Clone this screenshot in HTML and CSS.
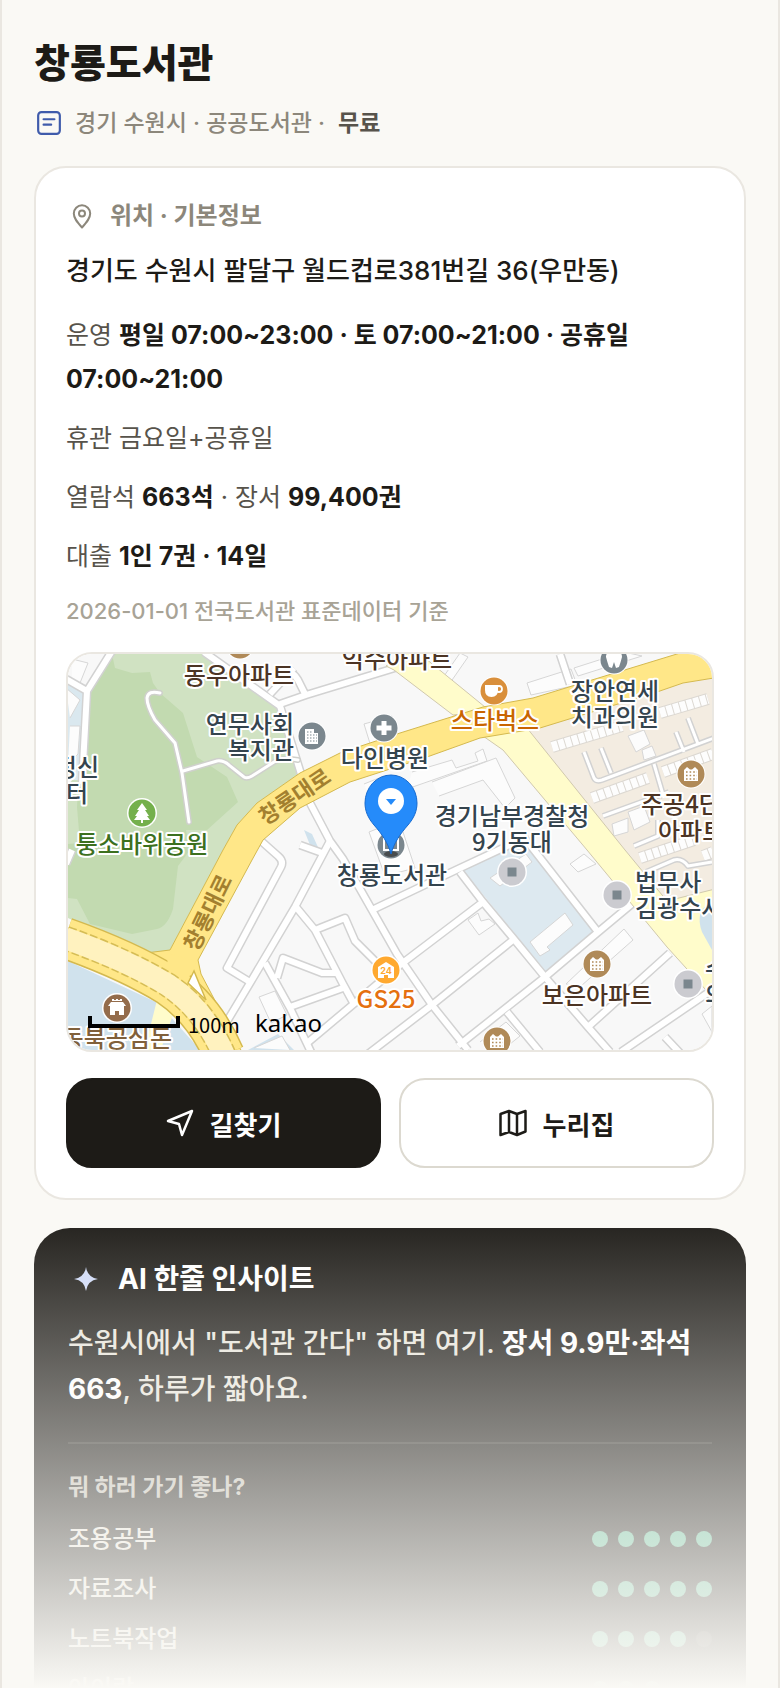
FILE: index.html
```html
<!DOCTYPE html>
<html lang="ko">
<head>
  <meta charset="UTF-8">
  <meta name="viewport" content="width=device-width, initial-scale=1.0">
  <title>창룡도서관</title>
  <link rel="stylesheet" href="styles.css">
</head>
<body>

<main class="page">
  <header class="head">
    <h1>창룡도서관</h1>
    <div class="meta">
      <svg class="icon icon-type" viewBox="0 0 24 24" aria-hidden="true">
        <rect x="2" y="2" width="20" height="20" rx="3"/>
        <path d="M7 8.500h10M7 13.500h7"/>
      </svg>
      <span>경기 수원시 · 공공도서관 ·</span>
      <strong>무료</strong>
    </div>
  </header>

  <section class="card">
    <h2 class="card-title">
      <svg class="icon" viewBox="0 0 26 26" aria-hidden="true">
        <path d="M13 24.500C8 19 4.800 15.200 4.800 10.500a8.200 8.200 0 0 1 16.400 0c0 4.700-3.200 8.500-8.200 14z"/>
        <circle cx="13" cy="10.500" r="3"/>
      </svg>
      위치 · 기본정보
    </h2>
    <p class="address">경기도 수원시 팔달구 월드컵로381번길 36(우만동)</p>
    <div class="info">
      <p>운영 <b>평일 07:00~23:00 · 토 07:00~21:00 · 공휴일 07:00~21:00</b></p>
      <p>휴관 금요일+공휴일</p>
      <p>열람석 <b>663석</b> · 장서 <b>99,400권</b></p>
      <p>대출 <b>1인 7권 · 14일</b></p>
    </div>
    <p class="source">2026-01-01 전국도서관 표준데이터 기준</p>

    <div class="map">
      <svg viewBox="0 0 644 396" preserveAspectRatio="xMidYMid slice" role="img" aria-label="창룡도서관 지도">
        <defs>
          <g id="apt">
            <circle r="14.500" fill="#fff"/><circle r="13.500" fill="#b08a58"/>
            <path fill="#fff" d="M-7 7V-4l3-3 3 2.500h2L4-7l3 3V7z"/>
            <path stroke="#b08a58" stroke-width="1.400" stroke-dasharray="1.600 2" d="M-5-2H6M-5 1.500H6M-5 5H6"/>
          </g>
          <g id="office">
            <circle r="15" fill="#fff"/><circle r="13.500" fill="#cbcbd0"/>
            <path fill="#7b878e" d="M-4.500-4.500h9v9h-9z"/>
          </g>
          <g id="facility">
            <circle r="14.500" fill="#fff"/><circle r="13.500" fill="#7b878e"/>
          </g>
          <g id="streets">
            <path d="M136-2 212 52l16 52 14 45 20 38 13 18 29 51 25 44 35 51 36 45"/>
            <path d="M262 187 227 253 182 329 155 374"/>
            <path d="M212 50 238 41 330 13M208 20q14-8 22 6l8 16M202 40l24-26"/>
            <path d="M192 186l18 16q6 5 3 11L159 314l23 14"/>
            <path d="M228 253 247 276 275 330 287 352M247 276l30-12 10 23 22 22"/>
            <path d="M197 309 222 354 243 398M209 324l6-20 39 15h14M222 353l53-19"/>
            <path d="M238 390 332 311 415 248M304 256l84-40 60-28M232 191l25 9"/>
            <path d="M392 218 415 248 445 284 477 323 520 373 542 398"/>
            <path d="M455 182 530 278M390 392l87-69 52-44 36-30"/>
            <path d="M445 286 364 351 300 400M520 373l82-74M439 358l33 40M553 398l91-62M597 383l15 16"/>
            <path d="M44-3 19 37 14 130M-2 25l21 12M492 0l10 30M-2 210l6-14"/>
          </g>
          <g id="lanes">
            <path d="M516 98l10 26q2 4 8 2L646 84M533 94l10 25M586 110l10 34M620 64l10 26M608 78l8 20M535 162l66-24M566 192l24-10v-16"/>
            <path d="M578 218l28-12q8-2 14 6l24-4"/>
          </g>
        </defs>

        <rect width="644" height="396" fill="#f8f8f8"/>

        <!-- parks, water, blocks -->
        <path fill="#d0e2c2" d="M44 0h92l76 53 18 53 2 13-43 30-20 22-14 25-53 100-18 7-84-39V132l13-20 4-75z"/>
        <path fill="#c2dab0" d="M44 0l3 14 17 5 18-1 3 11 7 10 23 20 14 44 30 20 11 25-31 28H118l4 20-12 16-5 43q-6 18-16 20l-25 5-42-10-13-25-9-1v-54l12-1-3-36 2-35 5-71z"/>
        <path fill="#dae8ef" d="M0 29l16 9-4 88H0z"/>
        <path class="building" d="M-2 34l14 12-10 18M2 72h10l-2 28-10 10M4 5l16 4-8 20-8-4"/>
        <path fill="#dde9f0" d="M395 216l45-21 20-3 69 87-50 40z"/>
        <path fill="#d0e2ed" d="M0 307l90 42 45 50H0zM180 396l30-16 16 16zM236 176l8 4 10 22-10-6z"/>
        <path fill="#f3ece1" d="M459 76l130-38 26-9 29-5v212l-45 11-42-51z"/>

        <!-- buildings -->
        <g class="building">
          <path d="M296 70l28-8 8 24-28 10zM459 29l44-14 6 16-46 10zM506 14l50-16 18 4-64 20zM374 25l18-26 8 4-18 26zM344 118l40-12 4 8 22-7-3-8 8-4 4 12-80 28M364 128l64-24 19 40-10 10-22-28-44 16"/>
          <path d="M296 130l20-8 4 20-18 4M301 178l30-12 16 48-30 8z"/>
          <path d="M462 288l35-29 8 12-26 22 3 3-10 6zM422 224l36-24 6 8-32 24zM400 266l10-7 3 8 8-2 6 5-16 11zM498 330l58-55 9 11-52 46zM191 343l16-6 12 24-16 8zM502 210l14-10 12 10-18 8zM412 388l26-20 14 14-20 16M186 394l28-12 8 14M634 360l10-8v26z"/>
          <path d="M560 82l16-6 6 14-14 8zM544 170l16-6v14l-14 4zM560 158l16-6 6 16-16 8zM574 96l10-4 4 10-12 4z"/>
        </g>
        <g id="terraces">
          <path class="terrace-case" d="M484 93l70-21M592 59l48-14M524 144l56-20M595 118l50-18M572 204l54-18M635 202l10-4"/>
          <path class="terrace" d="M484 93l70-21M592 59l48-14M524 144l56-20M595 118l50-18M572 204l54-18M635 202l10-4"/>
        </g>

        <use href="#streets" class="street-case"/>
        <use href="#streets" class="street"/>
        <use href="#lanes" class="street-case thin"/>
        <use href="#lanes" class="street thin"/>

        <path class="path-case" d="M92 39q-12-3-13 5 0 8 8 22l20 23 7 30 7 49M115 117l34-10q7-1 13 5l14 11q3 2 8-1l22-14q8-5 24-2"/>
        <path class="path" d="M92 39q-12-3-13 5 0 8 8 22l20 23 7 30 7 49M115 117l34-10q7-1 13 5l14 11q3 2 8-1l22-14q8-5 24-2"/>

        <!-- main roads -->
        <path class="avenue" d="M318 12l8 4 59 45 34-4-2-4L352 0l-10-4zM415 82l20 14 84 100 80 97 48 53V235l-48 12-42-51L459 74z"/>
        <path fill="#d0e2ed" d="M644 248q-18 8-10 30l10 18z"/>
        <path fill="#fffccb" d="M90 342l18 10-16 46H76z"/>
        <path class="boulevard" d="M102 296l53-100 14-25 20-22 43-30 40-20 60-20 83-26 50-9L622-4h30v27l-37 6-26 9-117 36-60 10-53 19-77 25-50 26-37 32-11 20-54 100 3 14 42 80h-30l-75-83-17-15z"/>
        <path class="express-case" d="M-3 284q62 22 103 47 36 24 56 70"/>
        <path class="express" d="M-3 284q62 22 103 47 36 24 56 70"/>
        <path fill="#ffe788" d="M99 299l29 8-10 24-18-14z"/>
        <path class="express-line" d="M-3 284q62 22 103 47 36 24 56 70"/>
        <path class="express-inner" d="M-3 284q62 22 103 47 36 24 56 70"/>
        <path fill="#fff" stroke="#d4b94f" stroke-width="1.500" d="M126 317l-6 12 18 17z"/>

        <text class="road-name" transform="translate(231 149) rotate(-34)" text-anchor="middle">창룡대로</text>
        <text class="road-name" transform="translate(147 262) rotate(-64)" text-anchor="middle">창룡대로</text>

        <!-- places -->
        <use href="#apt" x="172" y="-9"/>
        <use href="#apt" x="623" y="120"/>
        <use href="#apt" x="529" y="310"/>
        <use href="#apt" x="429" y="387"/>
        <use href="#office" x="444" y="218"/>
        <use href="#office" x="549" y="241"/>
        <use href="#office" x="620" y="330"/>

        <use href="#facility" x="244" y="82"/>
        <path fill="#fff" d="M237 75h9v4h4v11h-13z"/>
        <path stroke="#7b878e" stroke-width="1.200" stroke-dasharray="1.500 1.500" d="M239 78h6M239 81h10M239 84h10M239 87h10"/>
        <use href="#facility" x="316" y="74"/>
        <path fill="#fff" d="M313.500 67h5v4.500h5v5h-5V81h-5v-4.500h-5v-5h5z"/>
        <use href="#facility" x="546" y="6"/>
        <path fill="#fff" d="M538 3q0-7 8-3 8-4 8 3-1 4-3 10l-3 1-2-6-2 6-3-1q-2-6-3-10z"/>

        <circle cx="426" cy="37" r="14.500" fill="#fff"/><circle cx="426" cy="37" r="13.500" fill="#d98f3b"/>
        <path fill="#fff" d="M417 31h13v5q0 7-6.500 7T417 36z"/>
        <circle cx="431" cy="35" r="3" fill="none" stroke="#fff" stroke-width="1.800"/>
        <circle cx="74" cy="159" r="15" fill="#fff"/><circle cx="74" cy="159" r="13.500" fill="#74b04c"/>
        <path fill="#fff" d="M74 149l5 7h-2l4 6h-2l3 4h-7v3h-2v-3h-7l3-4h-2l4-6h-2z"/>
        <circle cx="318" cy="316" r="15" fill="#fff"/><circle cx="318" cy="316" r="13.500" fill="#ffa930"/>
        <path fill="#fff" d="M310 324v-11l8-5 8 5v11h-6v-3h-4v3z"/>
        <text x="318" y="320" class="store-hours" text-anchor="middle">24</text>
        <circle cx="49" cy="354" r="15" fill="#fff"/><circle cx="49" cy="354" r="13.500" fill="#946c4b"/>
        <path fill="#fff" d="M40 352l3-4h12l3 4h-2v9h-5v-4h-4v4h-5v-9zM44 347v-2h2v1h2v-1h2v1h2v-1h2v2z"/>

        <g class="place">
          <text x="226" y="79" text-anchor="end">연무사회</text>
          <text x="226" y="105" text-anchor="end">복지관</text>
          <text x="317" y="113" text-anchor="middle">다인병원</text>
          <text x="547" y="46" text-anchor="middle">장안연세</text>
          <text x="547" y="72" text-anchor="middle">치과의원</text>
          <text x="444" y="171" text-anchor="middle">경기남부경찰청</text>
          <text x="444" y="197" text-anchor="middle">9기동대</text>
          <text x="324" y="230" text-anchor="middle">창룡도서관</text>
          <text x="31" y="122" text-anchor="end">정신</text>
          <text x="20" y="148" text-anchor="end">터</text>
          <text x="567" y="237">법무사</text>
          <text x="567" y="263">김광수사</text>
          <text x="637" y="324">수</text>
          <text x="637" y="350">의</text>
        </g>
        <g class="place home">
          <text x="171" y="30" text-anchor="middle">동우아파트</text>
          <text x="329" y="14" text-anchor="middle">익수아파트</text>
          <text x="573" y="159">주공4단</text>
          <text x="590" y="186">아파트</text>
          <text x="529" y="350" text-anchor="middle">보은아파트</text>
        </g>
        <text class="place cafe" x="427" y="75" text-anchor="middle">스타벅스</text>
        <text class="place store" x="318" y="354" text-anchor="middle">GS25</text>
        <text class="place park" x="74" y="199" text-anchor="middle">퉁소바위공원</text>
        <text class="place sight" x="104" y="393" text-anchor="end">동북공심돈</text>

        <!-- marker -->
        <use href="#facility" x="323" y="191"/>
        <path fill="#fff" d="M315 184h16v13h-16z"/>
        <path fill="#7b878e" d="M317 186h12v9h-12z"/>
        <ellipse cx="323" cy="200" rx="7" ry="3" fill="#333" opacity=".7"/>
        <path fill="#258bfa" stroke="#176bd0" d="M323 200c-3-11-9-20-17-29-6-7-9-14-9-22a26 28 0 0 1 52 0c0 8-3 15-9 22-8 9-14 18-17 29z"/>
        <circle cx="323" cy="147" r="13" fill="#fff"/>
        <path fill="#258bfa" d="M318 145h10l-5 6z"/>

        <path class="scale" d="M22 362v10h88v-10"/>
        <text x="120" y="379" class="scale-text">100m</text>
        <text x="187" y="378" class="brand">kakao</text>
      </svg>
    </div>

    <div class="actions">
      <a class="btn btn-dark" href="#route">
        <svg class="icon" viewBox="0 0 28 28" aria-hidden="true"><path d="M26 2 2 12l11 3 3 11z"/></svg>
        길찾기
      </a>
      <a class="btn" href="#homepage">
        <svg class="icon" viewBox="0 0 28 28" aria-hidden="true"><path d="M1.500 5 10 2l8 3 8.500-3v20.500L18 26l-8-3-8.500 3zM10 2v21M18 5v21"/></svg>
        누리집
      </a>
    </div>
  </section>

  <section class="insight">
    <h2 class="insight-title">
      <svg class="star" viewBox="0 0 24 24" aria-hidden="true"><path d="M12 0q1.500 10.500 12 12-10.500 1.500-12 12-1.500-10.500-12-12 10.500-1.500 12-12z"/></svg>
      AI 한줄 인사이트
    </h2>
    <p class="insight-text">수원시에서 "도서관 간다" 하면 여기. <b>장서 9.9만·좌석 663</b>, 하루가 짧아요.</p>
    <h3>뭐 하러 가기 좋나?</h3>
    <ul class="scores">
      <li>조용공부 <span class="dots"><i></i><i></i><i></i><i></i><i></i></span></li>
      <li>자료조사 <span class="dots"><i></i><i></i><i></i><i></i><i></i></span></li>
      <li>노트북작업 <span class="dots"><i></i><i></i><i></i><i></i><i class="off"></i></span></li>
      <li>아이랑 <span class="dots"><i></i><i></i><i></i><i class="off"></i><i class="off"></i></span></li>
    </ul>
  </section>

  <div class="fade"></div>
</main>

</body>
</html>
```
FILE: styles.css
```css
:root {
  --bg: #faf9f5;
  --line: #eae7e1;
  --ink: #1d1b17;
  --body: #57534b;
  --muted: #8c877b;
  --faint: #a8a396;
  --mint: #5cb893;
}

* {
  box-sizing: border-box;
}

body {
  margin: 0;
  background: var(--bg);
  color: var(--ink);
  font-family: Inter, "Noto Sans CJK KR", sans-serif;
  font-size: 24px;
}

h1, h2, h3, p, ul {
  margin: 0;
  padding: 0;
}

.page {
  position: relative;
  height: 100vh;
  overflow: hidden;
  padding: 36px 32px 0;
  border-left: 2px solid var(--line);
  border-right: 2px solid var(--line);
}

.icon {
  width: 26px;
  height: 26px;
  flex: none;
  fill: none;
  stroke: currentColor;
  stroke-width: 2;
  stroke-linecap: round;
  stroke-linejoin: round;
}

h1 {
  font-size: 39px;
  line-height: 54px;
  font-weight: 900;
}

.meta {
  display: flex;
  align-items: center;
  gap: 13px;
  margin-top: 14px;
  font-size: 23px;
  font-weight: 500;
  line-height: 38px;
  color: var(--muted);
}

.meta strong {
  color: var(--body);
}

.icon-type {
  color: #3f5bab;
  margin-left: 2px;
}

/* location card */
.card {
  margin-top: 24px;
  padding: 30px;
  background: #fff;
  border: 2px solid var(--line);
  border-radius: 32px;
}

.card-title {
  display: flex;
  align-items: center;
  gap: 15px;
  padding-left: 3px;
  font-size: 24px;
  line-height: 36px;
  color: var(--muted);
}

.address {
  margin-top: 17px;
  font-size: 26px;
  font-weight: 500;
  line-height: 40px;
}

.info {
  display: grid;
  gap: 15px;
  margin-top: 22px;
  font-size: 25px;
  line-height: 44px;
  color: var(--body);
}

.info b {
  color: var(--ink);
}

.source {
  margin-top: 16px;
  font-size: 22px;
  font-weight: 500;
  line-height: 34px;
  color: var(--faint);
}

.map {
  margin-top: 24px;
  border: 2px solid var(--line);
  border-radius: 26px;
  overflow: hidden;
}

.map svg {
  display: block;
  width: 100%;
}

.building {
  fill: #fcfcfc;
  stroke: #d6d6d6;
  stroke-width: 1;
}

.terrace, .terrace-case {
  fill: none;
  stroke: #fdfdfd;
  stroke-width: 10;
  stroke-dasharray: 6 1;
}

.terrace-case {
  stroke: #dcd8d2;
  stroke-width: 12;
  stroke-dasharray: none;
}

.street-case, .street {
  fill: none;
  stroke: #d2d2d2;
  stroke-width: 9;
  stroke-linejoin: round;
}

.street {
  stroke: #fff;
  stroke-width: 6;
}

.street-case.thin {
  stroke-width: 6;
}

.street.thin {
  stroke-width: 3;
}

.path-case, .path {
  fill: none;
  stroke: #cfd0cc;
  stroke-width: 6;
  stroke-linecap: round;
}

.path {
  stroke: #fff;
  stroke-width: 3;
}

.avenue {
  fill: #fffccb;
  stroke: #d0c8ad;
  stroke-width: 1;
}

.boulevard {
  fill: #ffe788;
  stroke: #d4b94f;
  stroke-width: 1;
}

.express-case, .express, .express-line, .express-inner {
  fill: none;
  stroke: #d4b94f;
  stroke-width: 42;
}

.express {
  stroke: #ffe788;
  stroke-width: 39;
}

.express-line {
  stroke: #d6bd55;
  stroke-width: 25;
  stroke-dasharray: 8 3;
}

.express-inner {
  stroke: #fff2bf;
  stroke-width: 22;
}

.road-name {
  font-size: 22px;
  font-weight: 700;
  fill: #a3802f;
}

.place {
  font-family: "Noto Sans CJK KR", sans-serif;
  font-size: 24px;
  font-weight: 500;
  fill: #34444e;
  stroke: #fff;
  stroke-width: 4;
  stroke-linejoin: round;
  paint-order: stroke;
}

.home {
  fill: #4c3424;
}

.cafe {
  fill: #c96500;
}

.store {
  fill: #e5700f;
}

.park {
  fill: #3c701e;
}

.sight {
  fill: #80603a;
}

.store-hours {
  font-size: 9px;
  font-weight: 700;
  fill: #ffa930;
}

.scale {
  fill: none;
  stroke: #000;
  stroke-width: 4;
}

.scale-text {
  font-family: "Noto Sans CJK KR", sans-serif;
  font-size: 20px;
}

.brand {
  font-family: "Noto Sans", sans-serif;
  font-size: 24px;
}

.actions {
  display: grid;
  grid-template-columns: 1fr 1fr;
  gap: 18px;
  margin-top: 26px;
}

.btn {
  display: flex;
  align-items: center;
  justify-content: center;
  gap: 16px;
  height: 90px;
  border: 2px solid #dcd9d0;
  border-radius: 26px;
  font-size: 26px;
  font-weight: 700;
  color: var(--ink);
  text-decoration: none;
}

.btn .icon {
  width: 28px;
  height: 28px;
  stroke-width: 2.5;
}

.btn-dark {
  background: var(--ink);
  border-color: var(--ink);
  color: #fff;
}

/* insight card */
.insight {
  margin-top: 28px;
  padding: 32px 34px;
  background: var(--ink);
  border-radius: 36px;
  color: #e8e5dc;
}

.insight-title {
  display: flex;
  align-items: center;
  gap: 20px;
  padding-left: 6px;
  font-size: 28px;
  line-height: 38px;
  color: #fff;
}

.star {
  width: 24px;
  height: 24px;
  fill: #cfdaf8;
}

.insight-text {
  margin-top: 22px;
  padding-bottom: 30px;
  border-bottom: 2px solid #34322d;
  font-size: 28px;
  font-weight: 500;
  line-height: 46px;
}

.insight-text b {
  color: #fff;
}

h3 {
  margin-top: 26px;
  font-size: 23px;
  line-height: 34px;
  color: #c1beb4;
}

.scores {
  margin-top: 10px;
  list-style: none;
  font-weight: 500;
}

.scores li {
  display: flex;
  align-items: center;
  justify-content: space-between;
  line-height: 50px;
}

.dots {
  display: flex;
  gap: 10px;
}

.dots i {
  width: 16px;
  height: 16px;
  border-radius: 50%;
  background: var(--mint);
}

.dots .off {
  background: #3a3833;
}

/* preview fades out into the page */
.fade {
  position: absolute;
  left: -2px;
  right: -2px;
  bottom: 0;
  height: 484px;
  background: linear-gradient(rgba(250, 249, 245, 0), #faf9f5);
  pointer-events: none;
}
```
